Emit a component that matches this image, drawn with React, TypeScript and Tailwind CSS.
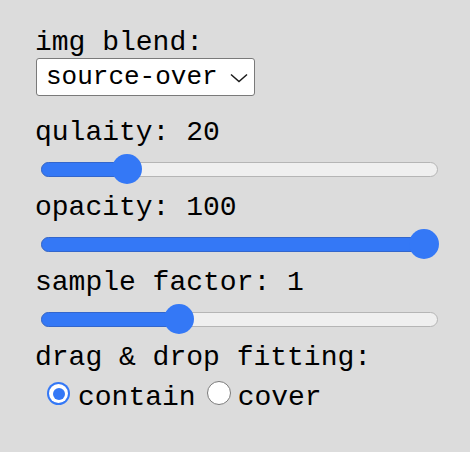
import React from "react";

function Slider({ thumb }: { thumb: number }) {
  // track spans x 41..438 in page coords; container starts at x 35
  const trackLeft = 6;
  const trackWidth = 397;
  const fill = thumb - 41;
  return (
    <div className="relative h-[30px]" style={{ width: 410 }}>
      <div
        className="absolute top-[7.5px] h-[15px] rounded-full bg-[#efefef] border border-[#b5b5b5]"
        style={{ left: trackLeft, width: trackWidth }}
      />
      <div
        className="absolute top-[7.5px] h-[15px] rounded-full bg-[#3478f6] border border-[#3366cc]"
        style={{ left: trackLeft, width: fill }}
      />
      <div
        className="absolute top-0 h-[30px] w-[30px] rounded-full bg-[#3478f6]"
        style={{ left: thumb - 35 - 15 }}
      />
    </div>
  );
}

export default function App() {
  return (
    <div
      className="w-[470px] h-[452px] bg-[#dcdcdc] text-black pl-[35px] pt-[27px] text-[28px] leading-[32px]"
      style={{ fontFamily: '"Courier New", "Liberation Mono", monospace' }}
    >
      <div className="h-[32px] whitespace-pre">img blend:</div>
      <div className="mt-[-1px] ml-[1px] w-[219px] h-[38px] bg-white border border-[#7a7a7a] rounded-[3px] flex items-center pl-[9px] relative text-[26px]">
        <span className="whitespace-pre">source-over</span>
        <svg
          className="absolute left-[193px] top-[14px]"
          width="18"
          height="10"
          viewBox="0 0 18 10"
        >
          <polyline
            points="1,1.5 9,8.5 17,1.5"
            fill="none"
            stroke="#1a1a1a"
            strokeWidth="1.5"
          />
        </svg>
      </div>
      <div className="mt-[21px] h-[32px] whitespace-pre">qulaity: 20</div>
      <div className="mt-[5px]">
        <Slider thumb={127} />
      </div>
      <div className="mt-[8px] h-[32px] whitespace-pre">opacity: 100</div>
      <div className="mt-[5px]">
        <Slider thumb={424} />
      </div>
      <div className="mt-[8px] h-[32px] whitespace-pre">sample factor: 1</div>
      <div className="mt-[5px]">
        <Slider thumb={179} />
      </div>
      <div className="mt-[8px] h-[32px] whitespace-pre">drag &amp; drop fitting:</div>
      <div className="mt-[8px] h-[32px] flex items-start">
        <div className="ml-[12px] w-[23px] h-[23px] rounded-full bg-[#3478f6] flex items-center justify-center">
          <div className="w-[19px] h-[19px] rounded-full bg-white flex items-center justify-center">
            <div className="w-[12px] h-[12px] rounded-full bg-[#3478f6]" />
          </div>
        </div>
        <span className="ml-[8px] whitespace-pre">contain</span>
        <div className="ml-[11px] mt-[-1px] w-[24px] h-[24px] rounded-full bg-white border-[1.5px] border-[#7a7a7a]" />
        <span className="ml-[7px] whitespace-pre">cover</span>
      </div>
    </div>
  );
}
